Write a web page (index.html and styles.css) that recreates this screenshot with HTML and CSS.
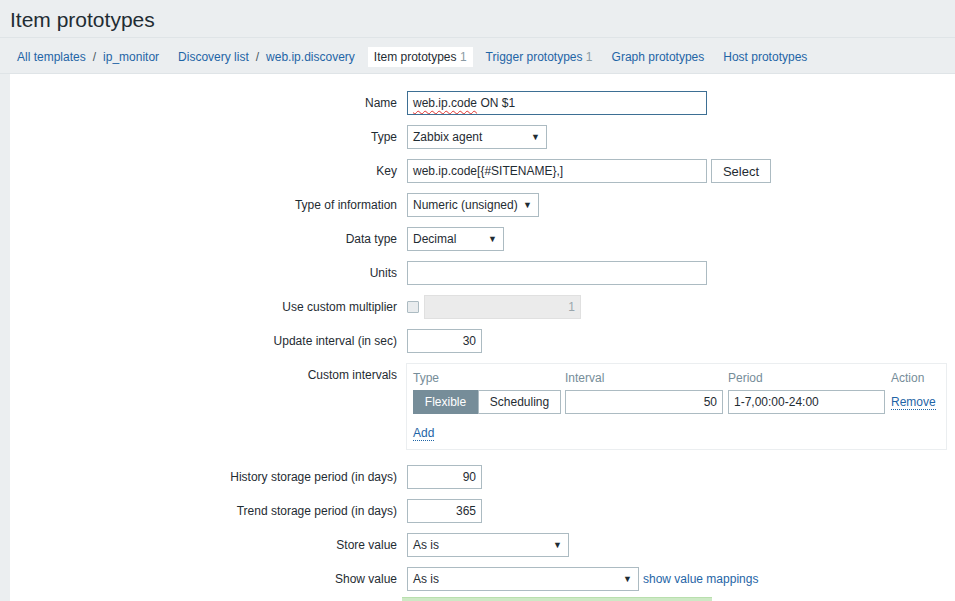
FILE: index.html
```html
<!DOCTYPE html>
<html>
<head>
<meta charset="utf-8">
<title>Item prototypes</title>
<link rel="stylesheet" href="styles.css">
</head>
<body>
<header class="page-header"><h1>Item prototypes</h1></header>
<nav class="tabs">
  <div class="nav-item"><a class="lnk">All templates</a><span class="sep">/</span><a class="lnk">ip_monitor</a></div>
  <div class="nav-item"><a class="lnk">Discovery list</a><span class="sep">/</span><a class="lnk">web.ip.discovery</a></div>
  <div class="nav-item active"><span class="cur">Item prototypes</span> <span class="count">1</span></div>
  <div class="nav-item"><a class="lnk">Trigger prototypes</a> <span class="count">1</span></div>
  <div class="nav-item"><a class="lnk">Graph prototypes</a></div>
  <div class="nav-item"><a class="lnk">Host prototypes</a></div>
</nav>
<main class="panel">
  <div class="form">
    <div class="lbl">Name</div>
    <div class="field"><div class="input w300 focused"><span class="spell">web.ip.code</span> ON $1</div></div>

    <div class="lbl">Type</div>
    <div class="field"><div class="select w140"><span>Zabbix agent</span><span class="arrow">▼</span></div></div>

    <div class="lbl">Key</div>
    <div class="field"><div class="input w300">web.ip.code[{#SITENAME},]</div><button class="btn">Select</button></div>

    <div class="lbl">Type of information</div>
    <div class="field"><div class="select w132"><span>Numeric (unsigned)</span><span class="arrow">▼</span></div></div>

    <div class="lbl">Data type</div>
    <div class="field"><div class="select w97"><span>Decimal</span><span class="arrow">▼</span></div></div>

    <div class="lbl">Units</div>
    <div class="field"><div class="input w300"></div></div>

    <div class="lbl">Use custom multiplier</div>
    <div class="field"><span class="checkbox"></span><div class="input disabled w157 right">1</div></div>

    <div class="lbl">Update interval (in sec)</div>
    <div class="field"><div class="input w75 right">30</div></div>

    <div class="lbl">Custom intervals</div>
    <div class="field">
      <div class="intervals">
        <div class="ih">Type</div><div class="ih">Interval</div><div class="ih">Period</div><div class="ih">Action</div>
        <div class="radio"><span class="opt on">Flexible</span><span class="opt">Scheduling</span></div>
        <div class="input w158 right">50</div>
        <div class="input w157">1-7,00:00-24:00</div>
        <div class="act"><a class="lnk dotted">Remove</a></div>
        <div class="add"><a class="lnk dotted">Add</a></div>
      </div>
    </div>

    <div class="lbl">History storage period (in days)</div>
    <div class="field"><div class="input w75 right">90</div></div>

    <div class="lbl">Trend storage period (in days)</div>
    <div class="field"><div class="input w75 right">365</div></div>

    <div class="lbl">Store value</div>
    <div class="field"><div class="select w162"><span>As is</span><span class="arrow">▼</span></div></div>

    <div class="lbl">Show value</div>
    <div class="field"><div class="select w232"><span>As is</span><span class="arrow">▼</span></div><a class="lnk map">show value mappings</a></div>

    <div class="lbl"></div>
    <div class="field top"><div class="green"></div></div>
  </div>
</main>
</body>
</html>
```

FILE: styles.css
```css
html, body {
  margin: 0;
  padding: 0;
}
body {
  background: #ebeef0;
  font-family: "Liberation Sans", Arial, sans-serif;
  font-size: 12px;
  color: #1f2c33;
  height: 601px;
  overflow: hidden;
}
.page-header {
  padding: 8px 10px 5px;
  border-bottom: 1px solid #dfe4e7;
}
.page-header h1 {
  margin: 0;
  font-size: 21px;
  font-weight: normal;
  line-height: 24px;
  color: #1f2c33;
}
.tabs {
  display: flex;
  gap: 7px;
  padding: 9px 0 6px 11px;
  border-bottom: 1px solid #dfe4e7;
}
.nav-item {
  padding: 3px 6px;
  line-height: 14px;
  white-space: nowrap;
}
.nav-item.active {
  background: #ffffff;
}
.lnk {
  color: #1f65a6;
  text-decoration: none;
  cursor: pointer;
}
.sep {
  margin: 0 7px;
  color: #4a5860;
}
.cur {
  color: #1f2c33;
}
.count {
  color: #8a9aa3;
}
.panel {
  box-sizing: border-box;
  background: #ffffff;
  margin-left: 10px;
  padding: 17px 0 0;
  height: 527px;
  overflow: hidden;
}
.form {
  display: grid;
  grid-template-columns: 387px 1fr;
  column-gap: 10px;
  row-gap: 10px;
}
.lbl {
  text-align: right;
  line-height: 24px;
  white-space: nowrap;
}
.field {
  display: flex;
  align-items: center;
  gap: 5px;
  min-height: 24px;
  align-self: start;
}
.field.top {
  align-items: flex-start;
}
.input {
  box-sizing: border-box;
  height: 24px;
  line-height: 22px;
  border: 1px solid #acbbc2;
  padding: 0 5px;
  background: #ffffff;
  white-space: nowrap;
  overflow: hidden;
}
.input.right {
  text-align: right;
}
.input.focused {
  border-color: #3d6f94;
}
.input.disabled {
  background: #ebebeb;
  border-color: #e0e0e0;
  color: #9aa6ad;
}
.spell {
  text-decoration: underline wavy #e0322f;
  text-decoration-thickness: 1px;
  text-underline-offset: 3px;
}
.w300 { width: 300px; }
.w158 { width: 158px; }
.w157 { width: 157px; }
.w75 { width: 75px; }
.w140 { width: 140px; }
.w132 { width: 132px; }
.w97 { width: 97px; }
.w162 { width: 162px; }
.w232 { width: 232px; }
.select {
  box-sizing: border-box;
  height: 24px;
  line-height: 22px;
  border: 1px solid #acbbc2;
  padding: 0 6px 0 5px;
  background: #ffffff;
  display: flex;
  justify-content: space-between;
  align-items: center;
  white-space: nowrap;
}
.arrow {
  font-size: 9px;
  color: #1f2c33;
}
.btn {
  box-sizing: border-box;
  height: 24px;
  width: 60px;
  margin-left: -1px;
  border: 1px solid #acbbc2;
  background: #ffffff;
  font-family: "Liberation Sans", Arial, sans-serif;
  font-size: 13px;
  color: #1f2c33;
  padding: 0;
}
.checkbox {
  box-sizing: border-box;
  width: 12px;
  height: 12px;
  border: 1px solid #acbbc2;
  background: #e9ecee;
  border-radius: 1px;
}
.intervals {
  box-sizing: border-box;
  width: 541px;
  margin-left: -1px;
  margin-bottom: 5px;
  border: 1px solid #ebeef0;
  padding: 5px 6px 7px;
  display: grid;
  grid-template-columns: 152px 163px 163px auto;
  row-gap: 3px;
}
.ih {
  color: #768d99;
  line-height: 18px;
}
.radio {
  display: flex;
  height: 24px;
}
.opt {
  box-sizing: border-box;
  height: 24px;
  line-height: 22px;
  border: 1px solid #acbbc2;
  background: #ffffff;
}
.opt.on {
  background: #768d99;
  border-color: #768d99;
  color: #ffffff;
  width: 65px;
  text-align: center;
  padding: 0;
}
.opt:not(.on) {
  width: 83px;
  text-align: center;
  padding: 0;
}
.act {
  line-height: 24px;
}
.dotted {
  border-bottom: 1px dotted #1f65a6;
}
.add {
  grid-column: 1 / -1;
  line-height: 18px;
  margin-top: 7px;
}
.map {
  margin-left: -1px;
}
.green {
  box-sizing: border-box;
  width: 310px;
  height: 20px;
  margin-left: -5px;
  margin-top: -4px;
  background: #cde9c5;
  border-top: 1px solid #b9dfae;
}
```
